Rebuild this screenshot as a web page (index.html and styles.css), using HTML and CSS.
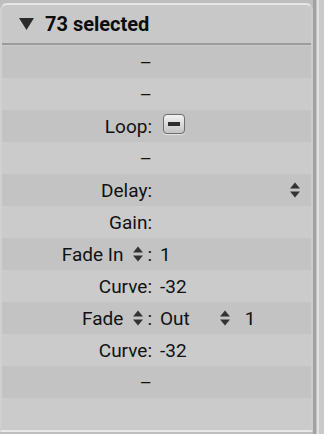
FILE: index.html
```html
<!DOCTYPE html>
<html>
<head>
<meta charset="utf-8">
<link rel="stylesheet" href="styles.css">
</head>
<body>
<div class="screen">
  <div class="panel">
    <div class="header">
      <svg class="disclosure" width="15" height="12" viewBox="0 0 15 12"><polygon points="0,0 15,0 7.5,12" fill="#2b2b2b"/></svg>
      <span class="title">73 selected</span>
    </div>
    <div class="rows">
      <div class="row"><span class="label">–</span><span class="value"></span></div>
      <div class="row"><span class="label">–</span><span class="value"></span></div>
      <div class="row"><span class="label">Loop:</span><span class="value"><span class="checkbox"><span class="mixed"></span></span></span></div>
      <div class="row"><span class="label">–</span><span class="value"></span></div>
      <div class="row"><span class="label">Delay:</span><span class="value"><svg class="stepper end" width="10" height="16" viewBox="0 0 10 16"><polygon points="5,0.5 10,6.5 0,6.5" fill="#333"/><polygon points="0,9.5 10,9.5 5,15.5" fill="#333"/></svg></span></div>
      <div class="row"><span class="label">Gain:</span><span class="value"></span></div>
      <div class="row"><span class="label"><span>Fade In</span><svg class="stepper lbl" width="10" height="16" viewBox="0 0 10 16"><polygon points="5,0.5 10,6.5 0,6.5" fill="#333"/><polygon points="0,9.5 10,9.5 5,15.5" fill="#333"/></svg><span>:</span></span><span class="value">1</span></div>
      <div class="row"><span class="label">Curve:</span><span class="value">-32</span></div>
      <div class="row"><span class="label"><span>Fade</span><svg class="stepper lbl" width="10" height="16" viewBox="0 0 10 16"><polygon points="5,0.5 10,6.5 0,6.5" fill="#333"/><polygon points="0,9.5 10,9.5 5,15.5" fill="#333"/></svg><span>:</span></span><span class="value"><span>Out</span><svg class="stepper mid" width="10" height="16" viewBox="0 0 10 16"><polygon points="5,0.5 10,6.5 0,6.5" fill="#333"/><polygon points="0,9.5 10,9.5 5,15.5" fill="#333"/></svg><span>1</span></span></div>
      <div class="row"><span class="label">Curve:</span><span class="value">-32</span></div>
      <div class="row"><span class="label">–</span><span class="value"></span></div>
      <div class="row"><span class="label"></span><span class="value"></span></div>
    </div>
  </div>
  <div class="gutter"></div>
</div>
</body>
</html>
```
FILE: styles.css
```css
html, body {
  margin: 0;
  padding: 0;
}
body {
  width: 324px;
  height: 434px;
  overflow: hidden;
  font-family: Roboto, "Liberation Sans", sans-serif;
  color: #111;
}
.screen {
  display: flex;
  width: 324px;
  height: 434px;
  background: #bebebe;
}
.panel {
  width: 309px;
  margin-top: 3px;
  align-self: flex-start;
  border-top: 2px solid #e6e6e6;
  border-left: 2px solid #d0d0d0;
  border-right: 2px solid #cdcdcd;
  border-bottom: 2px solid #e8e8e8;
  border-radius: 7px 7px 0 0;
  background: #c8c8c8;
  display: flex;
  flex-direction: column;
}
.header {
  height: 38px;
  display: flex;
  align-items: center;
  padding-left: 17px;
  gap: 11px;
  border-bottom: 2px solid #9b9b9b;
}
.title {
  font-weight: bold;
  font-size: 20px;
  color: #0d0d0d;
}
.rows {
  padding-top: 1px;
  background: #c9c9c9;
}
.row {
  height: 32px;
  display: grid;
  grid-template-columns: 150px 1fr;
  column-gap: 8px;
  align-items: center;
  font-size: 19px;
}
.row:nth-child(odd) {
  background: #c3c3c3;
}
.row:nth-child(even) {
  background: #cbcbcb;
}
.label {
  display: flex;
  justify-content: flex-end;
  align-items: center;
  white-space: nowrap;
}
.value {
  display: flex;
  align-items: center;
  white-space: nowrap;
}
.stepper {
  flex: none;
}
.stepper.lbl {
  margin: 0 4px 0 10px;
}
.stepper.mid {
  margin: 0 15px 0 30px;
}
.stepper.end {
  margin-left: 130px;
}
.checkbox {
  margin-left: 3px;
  width: 20px;
  height: 18px;
  border: 1px solid #6f6f6f;
  border-radius: 4px;
  background: linear-gradient(#f2f2f2, #d6d6d6 60%, #c4c4c4);
  box-shadow: 0 1px 1px rgba(255,255,255,0.6), 0 0 1px rgba(0,0,0,0.2);
  display: flex;
  align-items: center;
  justify-content: center;
  margin-top: -4px;
}
.mixed {
  width: 12px;
  height: 4px;
  background: #2e2e2e;
}
.gutter {
  width: 11px;
  background: linear-gradient(to right, #a2a2a2 0, #a2a2a2 3px, #c2c2c2 3px, #c2c2c2 4px, #e2e2e2 4px, #e2e2e2 6px, #c9c9c9 6px);
}
```
